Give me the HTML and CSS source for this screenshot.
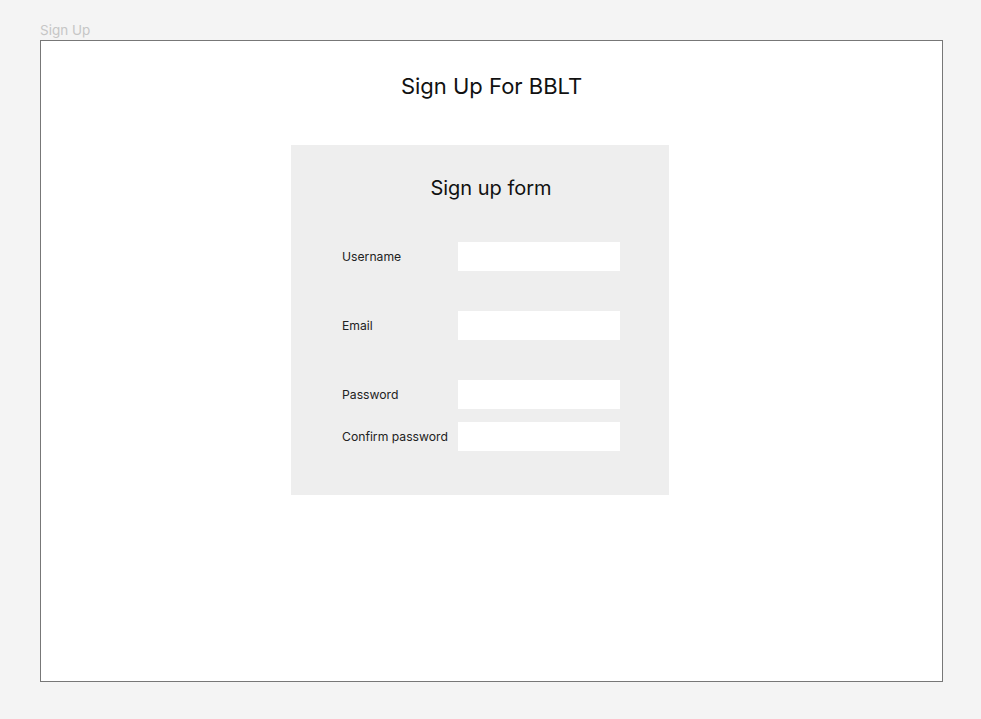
FILE: index.html
```html
<!DOCTYPE html>
<html lang="en">
<head>
<meta charset="utf-8">
<title>Sign Up</title>
<link rel="stylesheet" href="styles.css">
</head>
<body>
<div class="page">
  <div class="frame-label">Sign Up</div>
  <div class="frame">
    <h1 class="title">Sign Up For BBLT</h1>
    <form class="form-box">
      <h2 class="form-title">Sign up form</h2>
      <div class="row">
        <label class="label" for="u">Username</label>
        <input class="field" id="u" type="text">
      </div>
      <div class="row spaced">
        <label class="label" for="e">Email</label>
        <input class="field" id="e" type="email">
      </div>
      <div class="row spaced">
        <label class="label" for="p">Password</label>
        <input class="field" id="p" type="password">
      </div>
      <div class="row tight">
        <label class="label" for="c">Confirm password</label>
        <input class="field" id="c" type="password">
      </div>
    </form>
  </div>
</div>
</body>
</html>
```

FILE: styles.css
```css
* { box-sizing: border-box; }
html, body {
  margin: 0;
  padding: 0;
  background: #f4f4f4;
  font-family: Inter, "Liberation Sans", sans-serif;
}
.page {
  padding-left: 40px;
}
.frame-label {
  margin-top: 22px;
  height: 16px;
  line-height: 16px;
  margin-bottom: 2px;
  font-size: 13.5px;
  color: #c6c6c6;
}
.frame {
  width: 903px;
  height: 642px;
  background: #ffffff;
  border: 1px solid #777777;
  display: flex;
  flex-direction: column;
}
.title {
  margin: 31px 0 0 0;
  font-size: 22px;
  line-height: 28px;
  font-weight: 400;
  color: #111111;
  text-align: center;
}
.form-box {
  margin: 45px 0 0 250px;
  width: 378px;
  height: 350px;
  background: #eeeeee;
  padding: 31px 0 0 51px;
  display: flex;
  flex-direction: column;
}
.form-title {
  margin: 0 0 42px 0;
  padding-left: 22px;
  padding-right: 51px;
  font-size: 20px;
  line-height: 24px;
  font-weight: 400;
  color: #111111;
  text-align: center;
}
.row {
  display: flex;
  align-items: center;
  height: 29px;
}
.row.spaced { margin-top: 40px; }
.row.tight { margin-top: 13px; }
.label {
  width: 116px;
  font-size: 12.2px;
  color: #222222;
  white-space: nowrap;
}
.field {
  width: 162px;
  height: 29px;
  border: none;
  background: #ffffff;
  padding: 0;
  margin: 0;
  outline: none;
}
```
